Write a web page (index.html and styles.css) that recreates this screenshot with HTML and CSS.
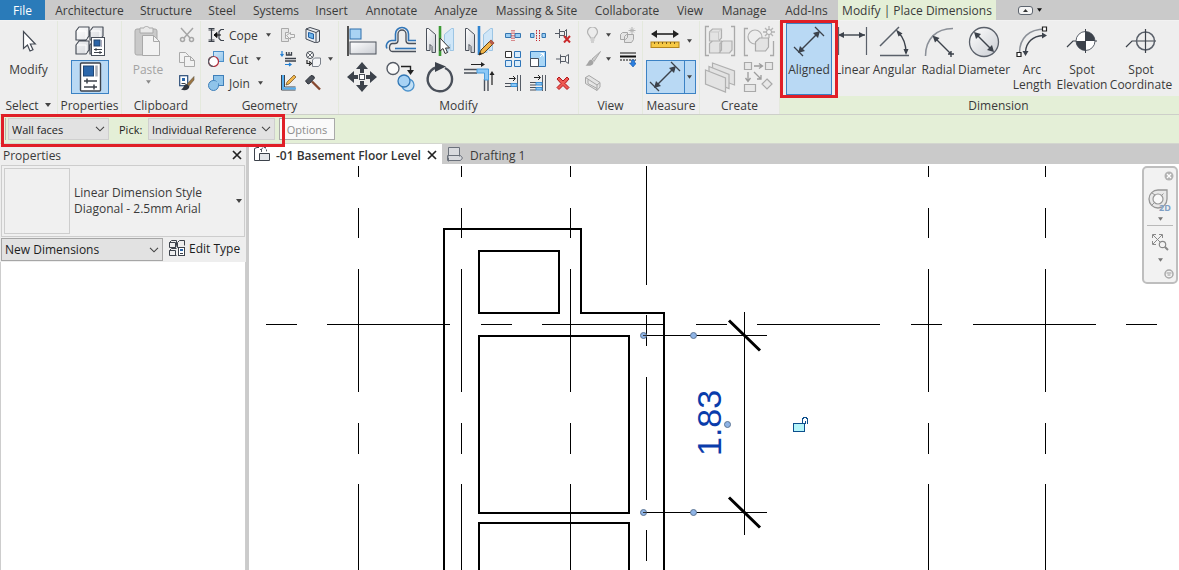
FILE: index.html
```html
<!DOCTYPE html>
<html lang="en">
<head>
<meta charset="utf-8">
<title>-01 Basement Floor Level</title>
<link rel="stylesheet" href="styles.css">
</head>
<body>
<svg class="defs" aria-hidden="true">
  <defs>
    <linearGradient id="steel" x1="0" y1="0" x2="1" y2="1"><stop offset="0" stop-color="#fff"/><stop offset="1" stop-color="#c9ccd2"/></linearGradient>
    <linearGradient id="sky" x1="0" y1="0" x2="1" y2="1"><stop offset="0" stop-color="#d3e9f9"/><stop offset="1" stop-color="#8fc3ea"/></linearGradient>
    <symbol id="caret" viewBox="0 0 6 4"><path d="M0 0h6L3 4z" fill="currentColor"/></symbol>
    <symbol id="chev" viewBox="0 0 10 6"><path d="M1 .8l4 4 4-4" fill="none" stroke="#444" stroke-width="1.1"/></symbol>
    <symbol id="aligned" viewBox="0 0 32 32"><g stroke="#3c424b" stroke-width="1.5" fill="#3c424b"><path d="M7 25L25 7"/><path d="M1 21l9 9M22 1l9 9" stroke-width="1.3"/><path d="M5 27l2-7 5 5zM27 5l-7 2 5 5z" stroke="none"/></g></symbol>
    <symbol id="closex" viewBox="0 0 10 10"><path d="M1 1l8 8M9 1L1 9" stroke="#222" stroke-width="1.7" fill="none"/></symbol>
  </defs>
</svg>
<div class="app">
  <nav class="tabs">
    <button class="tab file">File</button>
    <button class="tab">Architecture</button>
    <button class="tab">Structure</button>
    <button class="tab">Steel</button>
    <button class="tab">Systems</button>
    <button class="tab">Insert</button>
    <button class="tab">Annotate</button>
    <button class="tab">Analyze</button>
    <button class="tab">Massing &amp; Site</button>
    <button class="tab">Collaborate</button>
    <button class="tab">View</button>
    <button class="tab">Manage</button>
    <button class="tab">Add-Ins</button>
    <button class="tab context">Modify | Place Dimensions</button>
    <button class="tab fold" aria-label="Minimize ribbon">
      <svg width="15" height="9" viewBox="0 0 15 9"><rect x=".5" y=".5" width="14" height="8" rx="2.5" fill="#f4f4f4" stroke="#5d646e"/><path d="M5 6l2.500-3L10 6z" fill="#333"/></svg>
      <svg class="caret"><use href="#caret"/></svg>
    </button>
  </nav>

  <div class="ribbon">
    <section class="panel">
      <div class="body">
        <button class="big"><svg class="i32" viewBox="0 0 32 32"><path d="M10.500 5.500v17l4-3.500 2.500 6 3-1.300-2.700-5.700h5z" fill="#fff" stroke="#444a54" stroke-width="1.2"/></svg><span>Modify</span></button>
      </div>
      <h2>Select <svg class="caret wide"><use href="#caret"/></svg></h2>
    </section>

    <section class="panel">
      <div class="body stack">
        <button class="prop" aria-label="Type Properties"><svg class="i32" viewBox="0 0 32 32"><g fill="url(#steel)" stroke="#4a505a" stroke-width="1.200" stroke-linejoin="round"><path d="M2 6l3-4h10v9l-3 4H2zM16 6l3-4h10v9l-3 4H16zM2 20l3-4h10v9l-3 4H2zM16 20l3-4h10v9l-3 4H16z"/></g><path d="M3 6h9v8M16.500 6h9.500v8M3 20h9v8" stroke="#fff" fill="none"/><rect x="17.500" y="12.500" width="13" height="18" fill="#fff" stroke="#4a505a"/><rect x="20" y="15" width="6" height="6" fill="#2a64a8" stroke="#24466e"/><path d="M27.500 15v7" stroke="#aab"/><path d="M20 24.500h8M20 27.500h8M22 23v3M26 26v3" stroke="#3c424b"/></svg></button>
        <button class="prop on" aria-label="Properties"><svg class="i32" viewBox="0 0 32 32"><rect x="6.500" y="2" width="20" height="28" rx="1" fill="#fff" stroke="#3c424b" stroke-width="1.400"/><rect x="9.500" y="5" width="10" height="10" fill="#2b67ab" stroke="#1f4675"/><path d="M22.500 4.500v11" stroke="#a9adb5" stroke-width="2.500"/><path d="M10 20h13M10 26h13M13 17.500v5M20 23.500v5" stroke="#3c424b" stroke-width="1.500"/></svg></button>
      </div>
      <h2>Properties</h2>
    </section>

    <section class="panel">
      <div class="body clip">
        <button class="big off"><svg class="i32" viewBox="0 0 32 32"><rect x="3" y="3" width="22" height="26" rx="2" fill="#c9c9c9" stroke="#a9a9a9"/><path d="M8 2h4c0-2 5-2 5 0h4v5H8z" fill="#e9e9e9" stroke="#a9a9a9"/><path d="M10.500 9.500h11l6 6v14h-17z" fill="#f2f2f2" stroke="#a9a9a9"/><path d="M21.500 9.500v6h6" fill="none" stroke="#a9a9a9"/></svg><span>Paste</span><svg class="caret"><use href="#caret"/></svg></button>
        <div class="small-col">
          <button class="sm" aria-label="Cut"><svg class="i16" viewBox="0 0 16 16"><g fill="none" stroke="#a6a6a6" stroke-width="1.500"><path d="M2 1l9 10M14 1L5 11"/><circle cx="3.500" cy="12.500" r="2"/><circle cx="12.500" cy="12.500" r="2"/></g></svg></button>
          <button class="sm" aria-label="Copy"><svg class="i16" viewBox="0 0 16 16"><g fill="#f2f2f2" stroke="#a9a9a9"><path d="M.500 1.500h6l3 3v7h-9z"/><path d="M5.500 5.500h6l4 4v6h-10zM11.500 5.500v4h4"/></g></svg></button>
          <button class="sm" aria-label="Match type"><svg class="i16" viewBox="0 0 16 16"><rect x=".700" y=".700" width="8" height="10" fill="#fff" stroke="#2b4d78" stroke-width="1.200"/><rect x="3" y="3" width="3" height="3" fill="#2b67ab"/><path d="M2.500 8.500h4" stroke="#3c424b"/><path d="M15 1.500L8 9l2 2 5-6z" fill="#9c7440" stroke="#5e5848" stroke-width=".6"/><path d="M7.500 9c-3 0-2 4-5.500 5.500 4 1.500 8 .500 8.500-3z" fill="#30353d"/></svg></button>
        </div>
      </div>
      <h2>Clipboard</h2>
    </section>

    <section class="panel">
      <div class="body geo">
        <button class="sm lab"><svg class="i16" viewBox="0 0 16 16"><path d="M.500 1.500h6M.500 14.500h6M3.500 1.500v13M16 2.500h-3l-2 2v7l2 2h3M.500 3h6M.500 13h6" fill="none" stroke="#3c424b" stroke-width="1.200"/><path d="M6 8h7M9 5.500v5L6 8z" stroke="#111" fill="#111"/></svg>Cope<svg class="caret"><use href="#caret"/></svg></button>
        <button class="sm" aria-label="Paint"><svg class="i16" viewBox="0 0 16 16"><path d="M1.500 1.500h7v4h-3v6h3v3h-7z" fill="#e6e6e6" stroke="#a9a9a9"/><path d="M6.500 8.500l4-3v2h4v3h-4v2z" fill="#f0f0f0" stroke="#a9a9a9"/></svg></button>
        <button class="sm" aria-label="Wall opening"><svg class="i16" viewBox="0 0 16 16"><path d="M1 2l4-1.500 9.500 3v11L11 16 1 12z" fill="#e9edf2" stroke="#454b55"/><path d="M1 2l10 3.500V16M11 5.500l3.500-2" fill="none" stroke="#454b55"/><path d="M3.500 5.500l5 1.500v5l-5-1.800z" fill="#6eb4ea" stroke="#1f5fa5"/></svg></button>
        <span></span>
        <button class="sm lab"><svg class="i16" viewBox="0 0 16 16"><rect x="5.500" y=".500" width="10" height="10" fill="url(#sky)" stroke="#4b8fc9"/><circle cx="5.500" cy="10.500" r="5" fill="#fff" stroke="#b32b39" stroke-width="1.200"/><path d="M5.500 15.500a5 5 0 0 1 0-10" fill="none" stroke="#565c66" stroke-width="1.200"/></svg>Cut<svg class="caret"><use href="#caret"/></svg></button>
        <button class="sm" aria-label="Beam joins"><svg class="i16" viewBox="0 0 16 16"><path d="M2 0v5M.500 3L2 5l1.500-2M5 13.500h6M9 12l2 1.500L9 15" stroke="#2380d4" fill="none" stroke-width="1.200"/><path d="M6.500 1v3h5V1M9 1v3M5 7.500h11M5 10h11" stroke="#3c424b" fill="none" stroke-width="1.300"/></svg></button>
        <button class="sm" aria-label="Demolish"><svg class="i16" viewBox="0 0 16 16"><circle cx="5" cy="4" r="3.500" fill="#fff" stroke="#3c424b"/><path d="M2.500 1.500l5 5M7.500 1.500l-5 5" stroke="#3c424b" stroke-width=".8"/><path d="M2 9v3.500h3M4 10.500l2.500 2L4 14.500" fill="none" stroke="#222" stroke-width="1.200"/><path d="M7.500 9l2-2h6v6l-2 2.500h-6z" fill="#f4f5f7" stroke="#7b818a"/></svg></button>
        <svg class="caret mid"><use href="#caret"/></svg>
        <button class="sm lab"><svg class="i16" viewBox="0 0 16 16"><rect x="5.500" y=".500" width="10" height="10" fill="#8fc4ea" stroke="#3f7fb9"/><circle cx="5.500" cy="10.500" r="5" fill="#8fc4ea" stroke="#3f7fb9"/><path d="M6 6.500h4v4H6z" fill="#8fc4ea"/></svg>Join<svg class="caret"><use href="#caret"/></svg></button>
        <button class="sm" aria-label="Wall joins"><svg class="i16" viewBox="0 0 16 16"><path d="M1.500 0v15h14M4.500 0v12h11" fill="none" stroke="#3c424b"/><path d="M3 0v13.500h13" fill="none" stroke="#55aef0" stroke-width="2"/><path d="M6 10l1-3 7-7 2 2-7 7z" fill="#f0b54a" stroke="#6b4c1e" stroke-width=".7"/></svg></button>
        <button class="sm" aria-label="Split face"><svg class="i16" viewBox="0 0 16 16"><path d="M7 6.500l8 8" stroke="#86482e" stroke-width="2.400"/><path d="M.500 6L6 .500l2.500.5 1 2-5 5.500-1.500.500z" fill="#4d525b" stroke="#2d3138"/></svg></button>
      </div>
      <h2>Geometry</h2>
    </section>

    <section class="panel">
      <div class="body mod">
        <div class="grid-big">
          <button class="md" aria-label="Align"><svg class="i32" viewBox="0 0 32 32"><path d="M2 1v30" stroke="#111" stroke-width="1.400"/><rect x="4" y="4" width="11" height="10" fill="#a9d3f3" stroke="#2c6eac"/><rect x="4" y="17" width="26" height="12" fill="url(#steel)" stroke="#4a505a"/></svg></button>
          <button class="md" aria-label="Offset"><svg class="i32" viewBox="0 0 32 32"><path d="M31 15.500h-7.500V9a6.500 6.500 0 0 0-13 0v6.500H7a5.500 5.500 0 0 0-5 8" fill="none" stroke="#2f75b8" stroke-width="1.600"/><path d="M31 18.500h-7c-2 0-3-1-3-3V9a4 4 0 0 0-8 0v6.500c0 2-1 3-3 3H7.500c-3.500 0-4.500 8 0 8H31" fill="none" stroke="#4a505a" stroke-width="1.300"/><path d="M31 23.500H10" stroke="#2f75b8" stroke-width="1.600"/></svg></button>
          <button class="md" aria-label="Mirror - pick axis"><svg class="i32" viewBox="0 0 32 32"><path d="M2.500 3.500h2l7 6v18H8v-6l-2-2v6H2.500z" fill="url(#steel)" stroke="#4a505a"/><path d="M29.500 3.500h-2l-7 6v18H24v-6l2-2v6h3.500z" fill="#cfe6f8" stroke="#9cc5e4"/><path d="M16 1v30" stroke="#3c9b35" stroke-width="2.600"/><path d="M16 13v13l3-2.500 2 5 2.500-1-2-4.500h4z" fill="#fff" stroke="#333"/></svg></button>
          <button class="md" aria-label="Mirror - draw axis"><svg class="i32" viewBox="0 0 32 32"><path d="M2.500 3.500h2l7 6v18H8v-6l-2-2v6H2.500z" fill="url(#steel)" stroke="#4a505a"/><path d="M29.500 3.500h-2l-7 6v18H24v-6l2-2v6h3.500z" fill="#cfe6f8" stroke="#9cc5e4"/><path d="M16 1v29" stroke="#2f83cf" stroke-width="2.600"/><path d="M16 30l2-5 10-10 3 3-10 10z" fill="#f0b54a" stroke="#5c4218"/><path d="M26 17l2-2.500 3.500 3.500-2.500 2z" fill="#b85c4c"/><path d="M16 30l1-3 2 2z" fill="#222"/></svg></button>
          <button class="md" aria-label="Move"><svg class="i32" viewBox="0 0 32 32"><g fill="#3c424b"><path d="M16 1l6 7h-4v4h-4V8h-4zM16 31l6-7h-4v-4h-4v4h-4zM1 16l7-6v4h4v4H8v4zM31 16l-7-6v4h-4v4h4v4z"/></g><rect x="13.500" y="13.500" width="5" height="5" fill="#fff" stroke="#4a505a"/></svg></button>
          <button class="md" aria-label="Copy"><svg class="i32" viewBox="0 0 32 32"><circle cx="8" cy="7.500" r="6" fill="#fafafa" stroke="#555b65" stroke-width="1.400"/><path d="M16 5.500h9.500V10" fill="none" stroke="#222" stroke-width="1.400"/><path d="M22 9h7l-3.500 5z" fill="#222"/><circle cx="23" cy="24" r="6" fill="#c2e0f6" stroke="#4d94cd" stroke-width="1.300"/><circle cx="19" cy="20" r="6" fill="#a7d2f4" stroke="#3177b5" stroke-width="1.300"/></svg></button>
          <button class="md" aria-label="Rotate"><svg class="i32" viewBox="0 0 32 32"><path d="M21 7a12.200 12.200 0 1 1-9-.5" fill="none" stroke="#4a505a" stroke-width="2.400"/><path d="M11 1l11 4.500L11 11z" fill="#3c424b"/></svg></button>
          <button class="md" aria-label="Trim"><svg class="i32" viewBox="0 0 32 32"><path d="M1 8.500h13M1 12h13M21.500 18v12M25 18v12" stroke="#4a505a" stroke-width="1.400"/><path d="M14 8h11.500v11h-4v-7H14z" fill="#8cc8f6" stroke="#4b9ddd"/><path d="M8 3.500h12M29 24V12" stroke="#222" stroke-width="1.200"/><path d="M18 1l4 2.500L18 6zM26.500 14l2.500-4 2.500 4z" fill="#222"/></svg></button>
        </div>
        <div class="grid-small">
          <button class="sm" aria-label="Split element"><svg class="i16" viewBox="0 0 16 16"><path d="M.500 6.500H6v4H.500zM10 6.500h5.500v4H10z" fill="#9bcdf3" stroke="#3576b0"/><path d="M7 3v11M9 3v11" stroke="#c1272d" stroke-dasharray="1.500 1"/></svg></button>
          <button class="sm" aria-label="Split with gap"><svg class="i16" viewBox="0 0 16 16"><path d="M.500 6.500H4v4H.500zM12 6.500h3.500v4H12z" fill="#9bcdf3" stroke="#3576b0"/><path d="M6.500 3v11M9.500 3v11" stroke="#c1272d" stroke-dasharray="1.500 1"/></svg></button>
          <button class="sm" aria-label="Unpin"><svg class="i16" viewBox="0 0 16 16"><path d="M0 6.500h4M4.500 2v9M4.500 4.500h5M4.500 8.500h5M9.500 4.500l2-2v8l-2-2z" fill="#f6f6f6" stroke="#565c66"/><path d="M9 9l6 6.500M15 9l-6 6.500" stroke="#c9292c" stroke-width="2"/></svg></button>
          <button class="sm" aria-label="Array"><svg class="i16" viewBox="0 0 16 16"><path d="M.500.500h6v6h-6z" fill="#fff" stroke="#333"/><path d="M9.500.500h6v6h-6zM.500 9.500h6v6h-6zM9.500 9.500h6v6h-6z" fill="#d7ebfb" stroke="#2f75b8"/></svg></button>
          <button class="sm" aria-label="Scale"><svg class="i16" viewBox="0 0 16 16"><path d="M.500.500h15v15H.500z" fill="#a9d6f6" stroke="#2f75b8"/><path d="M.500 7.500h8v8h-8z" fill="#fff" stroke="#4a505a"/><path d="M10 6l3-3M10.500 2.500h3v3" stroke="#fff" fill="none"/></svg></button>
          <button class="sm" aria-label="Pin"><svg class="i16" viewBox="0 0 16 16"><path d="M1 8h4M5.500 3.500v9M5.500 5.500h5M5.500 10.500h5M10.500 5.500l3-2v9l-3-2z" fill="#f6f6f6" stroke="#565c66"/></svg></button>
          <button class="sm" aria-label="Trim single"><svg class="i16" viewBox="0 0 16 16"><path d="M12.500 0v16M15.500 0v16" stroke="#565c66"/><path d="M4 3.500h6M8 1l2.500 2.500L8 6" stroke="#222" fill="none"/><path d="M0 8.500h6M0 11.500h6" stroke="#4a505a"/><path d="M6 8.500h6v3H6z" fill="#8cc8f6" stroke="#3a90d6"/></svg></button>
          <button class="sm" aria-label="Trim multiple"><svg class="i16" viewBox="0 0 16 16"><path d="M12.500 0v16M15.500 0v16" stroke="#565c66"/><path d="M4 2.500h6M8 0l2.500 2.500L8 5" stroke="#222" fill="none"/><path d="M0 7.500h6M0 10h6M0 12.500h6M0 15h6" stroke="#4a505a"/><path d="M6 7.500h6V10H6zM6 12.500h6V15H6z" fill="#8cc8f6" stroke="#3a90d6"/></svg></button>
          <button class="sm" aria-label="Delete"><svg class="i16" viewBox="0 0 16 16"><path d="M2 4l2-2 4 4 4-4 2 2-4 4.500 4 4-2 2-4-4-4 4-2-2 4-4z" fill="#ee5a52" stroke="#b5161c"/></svg></button>
        </div>
      </div>
      <h2>Modify</h2>
    </section>

    <section class="panel">
      <div class="body view">
        <button class="sm car" aria-label="Hide"><svg class="i16" viewBox="0 0 16 16"><path d="M5.500 11c0-2-3-3-3-6a5 5 0 0 1 10 0c0 3-3 4-3 6zM5.500 13h4M6 15h3" fill="#ececec" stroke="#b2b2b2" stroke-width="1.200"/></svg><svg class="caret"><use href="#caret"/></svg></button>
        <button class="sm" aria-label="Displace"><svg class="i16" viewBox="0 0 16 16"><path d="M.500 7.500l2-2h5v5l-2 2h-5zM4.500 9.500l2-2h7v5l-2 3h-7z" fill="#e4e4e4" stroke="#a6a6a6"/><path d="M12 0v7M8.500 3.500h7M10 1.500l4 4M14 1.500l-4 4" stroke="#b2b2b2"/></svg></button>
        <button class="sm car" aria-label="Override graphics"><svg class="i16" viewBox="0 0 16 16"><path d="M15.500.500L7 8l2 2.500z" fill="#ccc" stroke="#aaa"/><path d="M6.500 8.500c-3 0-3 4-6 6 4 1 8 0 8-3.500z" fill="#a4a4a4"/></svg><svg class="caret"><use href="#caret"/></svg></button>
        <button class="sm" aria-label="Linework"><svg class="i16" viewBox="0 0 16 16"><path d="M0 2h16" stroke="#111"/><path d="M0 5.500h16" stroke="#111" stroke-width="2"/><path d="M0 9h16" stroke="#111" stroke-dasharray="2 1"/><path d="M11.500 9h3v3h2L13 16l-3.500-4h2z" fill="#2b7fe0" stroke="#1254a5" stroke-width=".6"/></svg></button>
        <button class="sm car" aria-label="Section box"><svg class="i16" viewBox="0 0 16 16"><path d="M.500 2.500L4 .500l11 7V12L12 15.500.500 8.500zM.500 2.500L12 10v5.500M12 10l3-2.500M3 4.500v4l9 5" fill="#e4e4e4" stroke="#a6a6a6"/></svg></button>
      </div>
      <h2>View</h2>
    </section>

    <section class="panel">
      <div class="body stack">
        <button class="split" aria-label="Measure"><svg class="i32" viewBox="0 0 32 32"><path d="M3 9h26" stroke="#222" stroke-width="1.600"/><path d="M2 9l6-4v8zM30 9l-6-4v8z" fill="#222"/><rect x="2" y="17" width="28" height="5.500" fill="#f6c945" stroke="#b5851a"/><path d="M5.500 17v2M9.500 17v2M13.500 17v2M17.500 17v2M21.500 17v2M25.500 17v2" stroke="#7a5a14"/></svg><svg class="caret"><use href="#caret"/></svg></button>
        <button class="split on" aria-label="Aligned dimension"><svg class="i32"><use href="#aligned"/></svg><svg class="caret"><use href="#caret"/></svg></button>
      </div>
      <h2>Measure</h2>
    </section>

    <section class="panel">
      <div class="body create">
        <button class="md" aria-label="Create assembly"><svg class="i32" viewBox="0 0 32 32"><g fill="none" stroke="#a9a9a9" stroke-width="1.300"><path d="M5 1.500H1.500v29H5M27 1.500h3.500v29H27"/></g><path d="M5.500 7l3-3h9v9l-3 3h-9zM5.500 18.500l3-2.500h9v9l-2.500 3H5.500zM16 18.500l3-2.500h9v9l-2.500 3H16z" fill="#e3e3e3" stroke="#b0b0b0" stroke-width="1.200"/><path d="M5.500 7h9v9M14.500 7l3-3" fill="none" stroke="#c9c9c9"/></svg></button>
        <button class="md" aria-label="Create group"><svg class="i32" viewBox="0 0 32 32"><path d="M5 3.500H1.500v27H5M27 30.500h3.500V16" fill="none" stroke="#a9a9a9" stroke-width="1.300"/><circle cx="12" cy="12" r="7" fill="#eee" stroke="#b0b0b0" stroke-width="1.200"/><path d="M12.500 17l4-4h9v9l-3 4h-10z" fill="#e3e3e3" stroke="#a9a9a9" stroke-width="1.200"/><path d="M26 1v12M20 7h12M22 3l8 8M30 3l-8 8" stroke="#b4b4b4" stroke-width="1.300"/><circle cx="26" cy="7" r="2.500" fill="#f3f3f3" stroke="#aaa"/></svg></button>
        <button class="md" aria-label="Create parts"><svg class="i32" viewBox="0 0 32 32"><g fill="#e3e3e3" stroke="#b0b0b0" stroke-width="1.200"><path d="M8.500 2l22 8v14l-22-8z"/><path d="M5 5.500l20 8v14l-20-8z"/><path d="M1.500 9l20 8v14l-20-8z"/></g></svg></button>
        <button class="md" aria-label="Create similar"><svg class="i32" viewBox="0 0 32 32"><g fill="#e8e8e8" stroke="#a9a9a9" stroke-width="1.200"><path d="M1.500 1.500h7v7h-7zM22.500 1.500h7v7h-7zM1.500 23.500h11v7h-11zM24 18l5 5-5 5-5-5z"/></g><path d="M11 5h8M16 2.500L19.500 5 16 7.500M5 11v8M2.500 17L5 20.500 7.500 17M11 11l7 7M18 14v4h-4" fill="none" stroke="#9c9c9c" stroke-width="1.300"/></svg></button>
      </div>
      <h2>Create</h2>
    </section>

    <section class="panel dim">
      <div class="body dims">
        <div class="marked"><button class="big on"><svg class="i32"><use href="#aligned"/></svg><span>Aligned</span></button></div>
        <button class="big"><svg class="i32" viewBox="0 0 32 32"><path d="M2 9h26" stroke="#3c424b" stroke-width="1.400"/><path d="M1 9l6-3v6zM28 9l-6-3v6z" fill="#3c424b"/><path d="M1.500 1v28M29.500 1v28" stroke="#5a606a" stroke-width="1.200"/></svg><span>Linear</span></button>
        <button class="big"><svg class="i32" viewBox="0 0 32 32"><path d="M1 20L20 1M1 29.500h29" stroke="#5a606a" stroke-width="1.500"/><path d="M19 6c6 6 8 14 8 21" fill="none" stroke="#3c424b" stroke-width="1.400"/><path d="M17 3.500l6.500 4-4 3zM24.500 23h5L27 29z" fill="#3c424b"/></svg><span>Angular</span></button>
        <button class="big"><svg class="i32" viewBox="0 0 32 32"><path d="M2.500 30C2.500 13 13 2.500 30 2.500" fill="none" stroke="#8b9098" stroke-width="1.500"/><path d="M12 12l16 16M28 25v6M25 28h6" stroke="#3c424b" stroke-width="1.400"/><path d="M9.500 9.500l7 2.500-4.500 4.500z" fill="#3c424b"/></svg><span>Radial</span></button>
        <button class="big"><svg class="i32" viewBox="0 0 32 32"><circle cx="16" cy="16" r="14.500" fill="url(#steel)" stroke="#5a606a" stroke-width="1.300"/><path d="M8 8l16 16" stroke="#3c424b" stroke-width="1.500"/><path d="M6 6l7 2-5 5zM26 26l-7-2 5-5z" fill="#3c424b"/></svg><span>Diameter</span></button>
        <button class="big"><svg class="i32" viewBox="0 0 32 32"><path d="M3.500 27C3.500 12 13 3 29 3" fill="none" stroke="#8b9098" stroke-width="1.500"/><path d="M9.500 26C10 16 17 10 27 9.500" fill="none" stroke="#3c424b" stroke-width="1.500"/><path d="M26 6.500l5 3-5 3zM6.500 25l3 5 3-5z" fill="#3c424b"/><path d="M1 26.500h4v4H1zM26.500 1h4v4h-4z" fill="#fff" stroke="#222" stroke-width="1.200"/></svg><span>Arc<br>Length</span></button>
        <button class="big"><svg class="i32" viewBox="0 0 32 32"><path d="M1 21l6-6h24" fill="none" stroke="#3c424b" stroke-width="1.200"/><circle cx="19.500" cy="15" r="9.500" fill="#fff" stroke="#5a606a"/><path d="M19.500 15V5.500a9.500 9.500 0 0 1 9.500 9.500zM19.500 15v9.500A9.500 9.500 0 0 1 10 15z" fill="#3c424b"/><path d="M19.500 3v24" stroke="#3c424b"/></svg><span>Spot<br>Elevation</span></button>
        <button class="big"><svg class="i32" viewBox="0 0 32 32"><path d="M1 21l6-6h24" fill="none" stroke="#3c424b" stroke-width="1.200"/><circle cx="20.500" cy="15" r="9" fill="none" stroke="#5a606a" stroke-width="1.500"/><path d="M20.500 3v24" stroke="#3c424b" stroke-width="1.200"/></svg><span>Spot<br>Coordinate</span></button>
      </div>
      <h2>Dimension</h2>
    </section>
  </div>

  <form class="options">
    <i class="grip"></i>
    <span class="combo prefer"><select aria-label="Placement reference"><option>Wall faces</option></select><svg class="chev"><use href="#chev"/></svg></span>
    <label for="pick">Pick:</label>
    <span class="combo pick"><select id="pick"><option>Individual Reference</option></select><svg class="chev"><use href="#chev"/></svg></span>
    <button class="opt" type="button" disabled>Options</button>
    <i class="mark"></i>
  </form>

  <main class="work">
    <aside class="props">
      <header><span>Properties</span><button aria-label="Close properties"><svg class="x"><use href="#closex"/></svg></button></header>
      <button class="type">
        <span class="thumb"></span>
        <span class="name">Linear Dimension Style<br>Diagonal - 2.5mm Arial</span>
        <svg class="caret wide"><use href="#caret"/></svg>
      </button>
      <div class="filter">
        <span class="combo"><select aria-label="Properties filter"><option>New Dimensions</option></select><svg class="chev"><use href="#chev"/></svg></span>
        <button class="edit"><svg class="i16" viewBox="0 0 16 16"><path d="M.500 2.500l2-2h5v5l-1 2h-6zM8.500 2.500l2-2h5v5M8.500 2.500v5h7M.500 10.500l2-2h5M.500 10.500v5h7M.500 10.500h6v5M.500 2.500h6v5" fill="none" stroke="#3c424b"/><rect x="9.500" y="7.500" width="6" height="8" fill="#fff" stroke="#3c424b"/><path d="M11 9h3v2h-3z" fill="#2b67ab"/><path d="M11 13.500h3" stroke="#3c424b"/></svg>Edit Type</button>
      </div>
      <div class="list"></div>
    </aside>

    <section class="doc">
      <div class="doctabs">
        <div class="doctab cur"><svg class="i16" viewBox="0 0 16 16"><path d="M6 13.500H.500V1.500L3 .500h2" fill="none" stroke="#3c424b"/><path d="M6 2.500h2M10 .500l3 0M7.500 5v-2a2.500 2.500 0 0 1 5 0v2" fill="none" stroke="#555b65" stroke-dasharray="2 1"/><path d="M5.500 6.500h10v7h-10z" fill="#e3e6ea" stroke="#3c424b"/></svg><span>-01 Basement Floor Level</span><button aria-label="Close view"><svg class="x"><use href="#closex"/></svg></button></div>
        <div class="doctab"><svg class="i16" viewBox="0 0 16 16"><path d="M1.500 9.500v-9h11v9M1.500 14.500v-4M.500 8.500h13l2 2.500-2 2.500H.500z" fill="#d8dade" stroke="#6b717b"/></svg><span>Drafting 1</span></div>
      </div>
      <div class="canvas">
        <svg class="plan" shape-rendering="crispEdges">
          <!-- scene units: 249,164 is the top-left corner of the viewport -->
          <g transform="translate(-249 -164)" fill="none" stroke="#000">
            <path d="M358.500 166v11m0 31v30m0 31v123m0 31v31m0 30v86M461.500 166v11m0 31v30m0 31v123m0 31v31m0 30v86M570.500 166v11m0 31v30m0 31v123m0 31v31m0 30v86M928.500 166v11m0 31v30m0 31v123m0 31v31m0 30v86M1045.500 166v11m0 31v30m0 31v123m0 31v31m0 30v86M646.500 166v119m0 30v31m0 31v123m0 30v31"/>
            <path d="M266 324.500h31m30 0h123m31 0h31m30 0h122m32 0h31m30 0h123m31 0h31m31 0h123m30 0h31"/>
            <path stroke-width="2" d="M444 580V229h137v84h83v267M479 251h80v62h-80zM479 336h150v177H479zM479 580v-57h150v57"/>
            <path d="M744.500 312v223M643 335.500h124M643 512.500h124"/>
            <path shape-rendering="auto" stroke-width="3" d="M729 320.500l31 30M729 497.500l31 30"/>
            <g shape-rendering="auto" fill="#8fb4e6" stroke="#5d7594"><circle cx="643.500" cy="335.500" r="3"/><circle cx="693.500" cy="335.500" r="3"/><circle cx="643.500" cy="512.500" r="3"/><circle cx="693.500" cy="512.500" r="3"/><circle cx="727.500" cy="424.500" r="3"/></g>
            <path d="M643 335.500h4M643 512.500h4" stroke="#333"/>
            <path d="M802.500 423v-4.500l2-1h2l1 2v4m-2 0v-3" stroke="#0d4f8c"/>
            <path d="M793.500 423.500h11v8h-11z" fill="#b5f5fa" stroke="#0d4f8c"/>
            <text class="dimtext" transform="translate(721 456) rotate(-90)">1.83</text>
          </g>
        </svg>
        <div class="navbar">
          <button aria-label="Close"><svg width="10" height="10" viewBox="0 0 10 10"><circle cx="5" cy="5" r="4.500" fill="#b3b3b3"/><path d="M3 3l4 4M7 3L3 7" stroke="#fff" stroke-width="1.300"/></svg></button>
          <button class="wheel" aria-label="Steering wheel"><svg width="26" height="26" viewBox="0 0 26 26"><path d="M11 1h9v9a9 9 0 1 1-9-9z" fill="#e9e9e9" stroke="#979797" stroke-width="1.300"/><circle cx="11" cy="10" r="5" fill="#f8f8f8" stroke="#979797" stroke-width="1.200"/><path d="M4.500 16.500l3-3M14.500 6.500l2-2M8 6L5 4" stroke="#979797"/><text class="two-d" x="12" y="22">2D</text></svg></button>
          <svg class="caret"><use href="#caret"/></svg>
          <hr>
          <button aria-label="Zoom region"><svg width="18" height="18" viewBox="0 0 18 18"><path d="M2 2l9 9M11 2l-9 9M1.500 5V1.500H5M8 1.500h3.500V5M1.500 8v3.500H5" fill="none" stroke="#8a8a8a"/><circle cx="11.500" cy="11.500" r="3.200" fill="#f3f3f3" stroke="#888" stroke-width="1.200"/><path d="M14 14l3 3" stroke="#888" stroke-width="2"/></svg></button>
          <svg class="caret"><use href="#caret"/></svg>
          <button class="low" aria-label="Customize"><svg width="10" height="10" viewBox="0 0 10 10"><circle cx="5" cy="5" r="4" fill="#f3f3f3" stroke="#a9a9a9" stroke-width="1.500"/><path d="M2.500 4h5M3.500 6h3" stroke="#999"/></svg></button>
        </div>
      </div>
    </section>
  </main>
</div>
</body>
</html>
```
FILE: styles.css
```css
* { box-sizing: border-box; }
body { margin: 0; }
.defs { position: absolute; width: 0; height: 0; }
.app {
  display: flex;
  flex-direction: column;
  height: 100vh;
  overflow: hidden;
  background: #fff;
  color: #3a3a3a;
  font: 12px/15px "Open Sans", "Noto Sans", sans-serif;
}
button { margin: 0; padding: 0; border: 0; background: none; color: inherit; font: inherit; white-space: nowrap; }
svg { display: block; flex: none; }
.i32 { width: 32px; height: 32px; }
.i16 { width: 16px; height: 16px; }
.caret { width: 5px; height: 4px; color: #444; }
.caret.wide { width: 8px; height: 4px; }
.x { width: 10px; height: 10px; }

/* ribbon tabs */
.tabs {
  display: grid;
  grid-template-columns: 45px 89px 64px 48px 60px 51px 69px 60px 101px 80px 46px 62px 63px 158px 1fr;
  height: 20px;
  background: #cacaca;
}
.tab { display: flex; align-items: center; justify-content: center; height: 20px; }
.tab.file { background: #2a7bb9; color: #fff; }
.tab.context { background: #e4efd7; }
.tab.fold { justify-content: flex-start; gap: 4px; padding-left: 22px; }
.tab.fold .caret { color: #111; }

/* ribbon */
.ribbon {
  display: grid;
  grid-template-columns: 58px 64px 79px 138px 240px 64px 57px 80px 1fr;
  height: 95px;
  background: #eee;
  border-top: 1px solid #f2f2f2;
  border-bottom: 1px solid #cdcfc9;
}
.panel { display: flex; flex-direction: column; border-right: 1px solid #e4e9dd; min-width: 0; }
.panel h2 { display: flex; align-items: center; justify-content: center; gap: 5px; height: 18px; margin: 0; font-size: 12px; font-weight: 400; white-space: nowrap; }
.panel .body { flex: 1; padding-top: 2px; }
.big { display: flex; flex-direction: column; align-items: center; width: 100%; padding-top: 3px; }
.big span { margin-top: 4px; }
.big .caret { margin-top: 3px; }
.big.off { color: #a3a3a3; }
.big.off .caret { color: #888; }
.sm { display: flex; align-items: center; justify-content: center; height: 24px; min-width: 25px; }
.md { display: flex; align-items: center; justify-content: center; height: 36px; }
.stack { display: flex; flex-direction: column; align-items: center; gap: 2px; }
.panel .stack { padding-top: 3px; }
.prop { display: flex; align-items: center; justify-content: center; width: 38px; height: 34px; }
.on { background: #b9d9f4; outline: 1px solid #3b82c4; outline-offset: -1px; }
.clip { display: grid; grid-template-columns: 52px 25px; }
.geo { display: grid; grid-template-columns: 67px 25px 26px 8px; grid-auto-rows: 24px; padding-left: 7px; }
.geo .mid { align-self: center; justify-self: center; }
.lab { justify-content: flex-start; gap: 5px; }
.lab .caret { margin-left: 3px; }
.mod { display: flex; gap: 2px; padding-left: 3px; }
.grid-big { display: grid; grid-template-columns: repeat(4, 39px); grid-auto-rows: 36px; }
.grid-small { display: grid; grid-template-columns: repeat(3, 25px); grid-auto-rows: 24px; }
.view { display: grid; grid-template-columns: 32px 28px; grid-auto-rows: 24px; padding-left: 3px; }
.car { justify-content: flex-start; gap: 5px; padding-left: 3px; }
.split { display: flex; align-items: center; gap: 6px; width: 50px; height: 34px; padding-left: 3px; }
.split.on { background: linear-gradient(#3b82c4, #3b82c4) 38px 0 / 1px 100% no-repeat #b9d9f4; }
.create { display: grid; grid-template-columns: 39px 39px; grid-auto-rows: 36px; }
.panel.dim { border-right: 0; }
.dims { display: grid; grid-template-columns: 52px 35px 49px 39px 52px 44px 56px 62px; padding-left: 3px; }
.dim h2 { background: #e4efd7; padding-left: 38px; }
.marked { position: relative; padding: 0 3px; }
.marked .on { height: 72px; }
.marked::after { content: ""; position: absolute; inset: -3px -3px -2px; border: 3px solid #e01f27; z-index: 2; pointer-events: none; }

/* options bar */
.options { position: relative; display: flex; align-items: center; height: 29px; padding-left: 5px; background: #e4efd7; border-bottom: 1px solid #d3d6cf; color: #1d1d1d; font-size: 11px; }
.grip { width: 1px; height: 22px; margin-right: 2px; background: #b3b3a6; }
.combo { position: relative; display: block; height: 22px; }
.combo select { width: 100%; height: 100%; margin: 0; padding: 0 16px 0 3px; border: 1px solid #cfcfcf; border-radius: 0; background: #e2e2e2; color: #1d1d1d; font: inherit; appearance: none; }
.combo .chev { position: absolute; right: 4px; top: 8px; width: 10px; height: 6px; pointer-events: none; }
.prefer { width: 101px; }
.pick { width: 127px; }
.options label { width: 25px; margin: 0 4px 0 10px; }
.opt { width: 56px; height: 22px; margin-left: 4px; background: #fafafa; border: 1px solid #a9a9a9; color: #8c8c8c; }
.mark { position: absolute; left: 1px; top: -1px; width: 284px; height: 33px; border: 3px solid #e01f27; z-index: 3; pointer-events: none; }

/* workspace */
.work { flex: 1; display: flex; min-height: 0; }
.props { display: flex; flex-direction: column; width: 249px; border-right: 3px solid #cbcbcb; background: #eee; }
.props header { display: flex; align-items: center; justify-content: space-between; height: 21px; padding: 1px 4px 0 3px; }
.type { display: flex; align-items: center; margin: 0 1px; height: 72px; padding: 2px 1px 2px 2px; border: 1px solid #cdcdcd; background: #f0f0f0; text-align: left; }
.thumb { width: 66px; height: 66px; margin-right: 4px; border: 1px solid #cdcdcd; }
.name { flex: 1; line-height: 16px; }
.filter { display: flex; align-items: flex-start; gap: 6px; padding: 1px; color: #1d1d1d; }
.filter .combo { width: 162px; height: 23px; }
.filter select { border-color: #a6a6a6; }
.filter .chev { top: 9px; }
.edit { display: flex; align-items: center; gap: 4px; height: 20px; }
.list { flex: 1; border: 1px solid #cdcdcd; border-width: 0 1px; background: #fff; }
.doc { flex: 1; display: flex; flex-direction: column; min-width: 0; }
.doctabs { display: flex; height: 20px; background: #cacaca; }
.doctab { display: flex; align-items: center; gap: 7px; padding: 2px 5px 0; }
.doctab.cur { gap: 6px; background: #fff; font-weight: 600; color: #333; }
.canvas { position: relative; flex: 1; overflow: hidden; background: #fff; }
.plan { width: 100%; height: 100%; }
.dimtext { font: 34px "Liberation Sans", sans-serif; fill: #0a3cab; stroke: none; }
.navbar { position: absolute; right: 1px; top: 2px; display: flex; flex-direction: column; align-items: center; width: 36px; height: 118px; padding: 3px; border: 2px solid #bebebe; border-radius: 5px; background: #f2f2f2; }
.navbar button:first-child, .navbar .low { align-self: flex-end; margin-right: -1px; }
.navbar .low { margin-top: auto; }
.wheel { margin: 8px 0 2px; }
.navbar .caret { color: #777; }
.navbar hr { width: 26px; margin: 4px 0 7px; border: 0; border-top: 1px solid #b9b9b9; }
.navbar hr + button { margin-bottom: 7px; }
.two-d { font: 700 9px "Open Sans", sans-serif; fill: #7f9fc4; }
```
